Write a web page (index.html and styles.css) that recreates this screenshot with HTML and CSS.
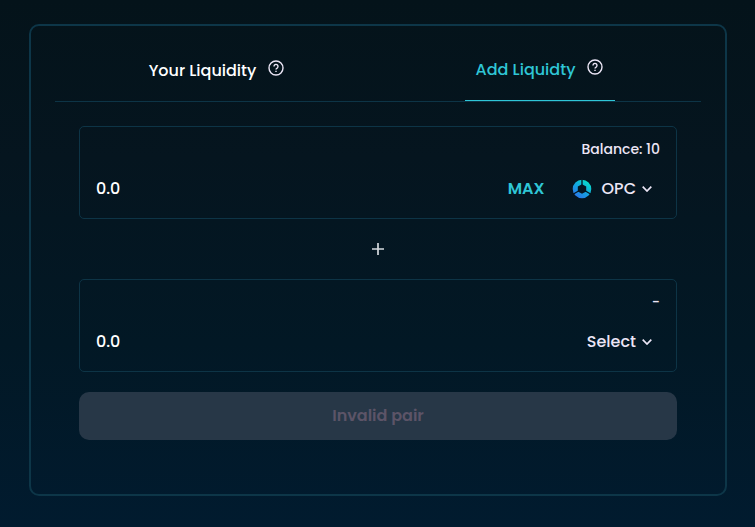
FILE: index.html
```html
<!DOCTYPE html>
<html lang="en">
<head>
<meta charset="utf-8">
<meta name="viewport" content="width=device-width, initial-scale=1">
<title>Add Liquidity</title>
<link rel="stylesheet" href="styles.css">
</head>
<body>
<main class="card">
  <nav class="tabs">
    <div class="tab">
      <a class="tab-link" href="#your">Your Liquidity</a>
      <button class="help" type="button" aria-label="About your liquidity">
        <svg viewBox="0 0 16 16" width="16" height="16"><circle cx="8" cy="8" r="7"/><path d="M6 6.4a2 2 0 1 1 3.1 1.7c-.8.5-1.1.8-1.1 1.5"/><path d="M8 10.8v1.2"/></svg>
      </button>
    </div>
    <div class="tab tab-active">
      <a class="tab-link" href="#add">Add Liquidty</a>
      <button class="help" type="button" aria-label="About adding liquidity">
        <svg viewBox="0 0 16 16" width="16" height="16"><circle cx="8" cy="8" r="7"/><path d="M6 6.4a2 2 0 1 1 3.1 1.7c-.8.5-1.1.8-1.1 1.5"/><path d="M8 10.8v1.2"/></svg>
      </button>
    </div>
  </nav>
  <form class="form">
    <section class="field">
      <div class="balance">Balance: 10</div>
      <div class="row">
        <input class="amount" type="text" placeholder="0.0" aria-label="First amount">
        <button class="max" type="button">MAX</button>
        <button class="token" type="button">
          <svg class="coin" viewBox="0 0 20 20" width="20" height="20">
            <defs><linearGradient id="coin" x1=".8" y1=".1" x2=".2" y2=".9"><stop offset="0" stop-color="#08dcc8"/><stop offset=".5" stop-color="#12a6e0"/><stop offset="1" stop-color="#2a78e8"/></linearGradient></defs>
            <path fill="url(#coin)" fill-rule="evenodd" d="M10 .7a9.3 9.3 0 1 0 0 18.6A9.3 9.3 0 0 0 10 .7ZM10 5.2l4.2 2.4v4.8l-4.2 2.4-4.2-2.4V7.600Z"/>
            <path class="coin-gap" d="M10 0v7M1 15.2l6-3.5M19 15.2l-6-3.5"/>
          </svg>
          <span>OPC</span>
          <svg class="chevron" viewBox="0 0 10 6" width="10" height="6"><path d="M.7 .7L5 5 9.3 .7"/></svg>
        </button>
      </div>
    </section>
    <div class="plus"><svg viewBox="0 0 12 12" width="12" height="12"><path d="M6 0v12M0 6h12"/></svg></div>
    <section class="field">
      <div class="balance">-</div>
      <div class="row">
        <input class="amount" type="text" placeholder="0.0" aria-label="Second amount">
        <button class="token" type="button">
          <span>Select</span>
          <svg class="chevron" viewBox="0 0 10 6" width="10" height="6"><path d="M.7 .7L5 5 9.3 .7"/></svg>
        </button>
      </div>
    </section>
    <button class="submit" type="submit" disabled>Invalid pair</button>
  </form>
</main>
</body>
</html>
```
FILE: styles.css
```css
* { box-sizing: border-box; }
body {
  margin: 0;
  min-height: 100vh;
  padding: 24px 28px 31px 29px;
  background: linear-gradient(#04131a, #05151f 30%, #021825 65%, #011b2f);
  color: #ece6f6;
  font: 500 16px/24px Poppins, Inter, sans-serif;
}
button, input { font: inherit; color: inherit; background: none; border: 0; padding: 0; }
button { cursor: pointer; }
svg { display: block; fill: none; stroke: currentColor; }
.card {
  border: 2px solid #0d3648;
  border-radius: 10px;
  padding: 20px 24px 54px;
}
.tabs {
  display: grid;
  grid-template-columns: 1fr 1fr;
  justify-items: center;
  border-bottom: 1px solid #0d3446;
}
.tab {
  display: flex;
  justify-content: center;
  gap: 12px;
  min-width: 150px;
  padding: 13px 0 18px;
}
.tab-link { color: #fff; text-decoration: none; }
.tab-active { padding: 12px 0 18px; border-bottom: 1px solid #2fc6d6; }
.tab-active .tab-link { color: #2fc6d6; }
.help { align-self: flex-start; margin-top: 1px; stroke-width: 1.4; }
.form { padding: 24px 24px 0; }
.field {
  border: 1px solid #0d3446;
  border-radius: 5px;
  padding: 12px 16px 14px;
}
.balance { font-size: 14px; line-height: 20px; text-align: right; }
.row { display: flex; align-items: center; padding: 15px 8px 0 0; height: 45px; }
.amount { flex: 1; min-width: 0; color: #fff; outline: 0; }
.amount::placeholder { color: #fff; opacity: 1; }
.max { color: #2fc6d6; font-weight: 600; margin-right: 27px; }
.token { display: flex; align-items: center; gap: 6px; }
.coin { stroke: none; margin-right: 4px; }
.coin-gap { stroke: #05151f; stroke-width: 1.3; }
.chevron { stroke-width: 1.7; }
.plus { display: flex; justify-content: center; align-items: center; height: 60px; }
.plus svg { stroke: #d5dade; stroke-width: 1.7; }
.submit {
  display: block;
  width: 100%;
  height: 48px;
  margin-top: 20px;
  border-radius: 10px;
  background: #273747;
  color: #5c5467;
  font-weight: 600;
  cursor: default;
}
```
